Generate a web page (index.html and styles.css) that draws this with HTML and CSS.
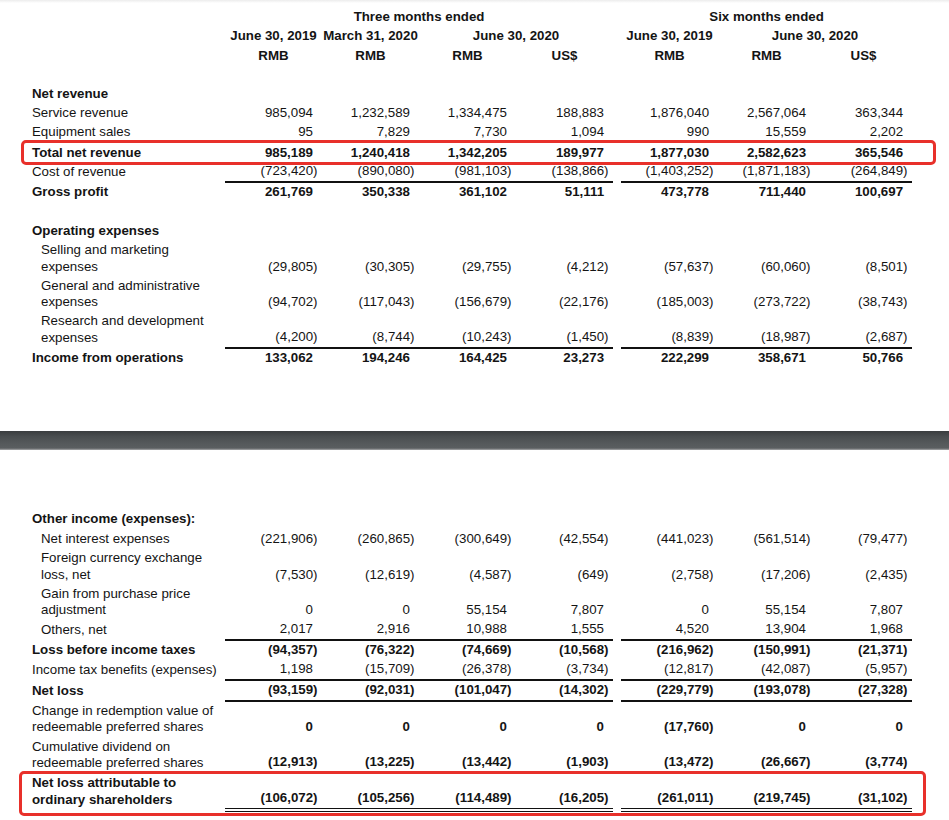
FILE: index.html
```html
<!DOCTYPE html>
<html lang="en">
<head>
<meta charset="utf-8">
<title>Unaudited Condensed Consolidated Statements of Operations</title>
<link rel="stylesheet" href="styles.css">
</head>
<body>
<section class="part part-top">
  <table class="fin">
    <colgroup>
      <col class="c-label"><col class="c-num"><col class="c-num"><col class="c-num"><col class="c-num"><col class="c-sp"><col class="c-num"><col class="c-num"><col class="c-num">
    </colgroup>
    <thead>
      <tr class="hrow">
        <td class="l"></td><th colspan="4">Three months ended</th><td class="sp"></td><th colspan="3">Six months ended</th>
      </tr>
      <tr class="hrow">
        <td class="l"></td><th>June 30, 2019</th><th>March 31, 2020</th><th colspan="2">June 30, 2020</th><td class="sp"></td><th>June 30, 2019</th><th colspan="2">June 30, 2020</th>
      </tr>
      <tr class="hrow">
        <td class="l"></td><th>RMB</th><th>RMB</th><th>RMB</th><th>US$</th><td class="sp"></td><th>RMB</th><th>RMB</th><th>US$</th>
      </tr>
    </thead>
    <tbody>
      <tr class="blank"><td class="l" colspan="9"></td></tr>
      <tr class="b"><td class="l">Net revenue</td><td></td><td></td><td></td><td></td><td class="sp"></td><td></td><td></td><td></td></tr>
      <tr><td class="l">Service revenue</td><td>985,094</td><td>1,232,589</td><td>1,334,475</td><td>188,883</td><td class="sp"></td><td>1,876,040</td><td>2,567,064</td><td>363,344</td></tr>
      <tr><td class="l">Equipment sales</td><td>95</td><td>7,829</td><td>7,730</td><td>1,094</td><td class="sp"></td><td>990</td><td>15,559</td><td>2,202</td></tr>
      <tr class="b hl total"><td class="l">Total net revenue<span class="mark mark-total"></span></td><td>985,189</td><td>1,240,418</td><td>1,342,205</td><td>189,977</td><td class="sp"></td><td>1,877,030</td><td>2,582,623</td><td>365,546</td></tr>
      <tr class="u"><td class="l">Cost of revenue</td><td class="n">(723,420)</td><td class="n">(890,080)</td><td class="n">(981,103)</td><td class="n">(138,866)</td><td class="sp"></td><td class="n">(1,403,252)</td><td class="n">(1,871,183)</td><td class="n">(264,849)</td></tr>
      <tr class="b"><td class="l">Gross profit</td><td>261,769</td><td>350,338</td><td>361,102</td><td>51,111</td><td class="sp"></td><td>473,778</td><td>711,440</td><td>100,697</td></tr>
      <tr class="blank tall"><td class="l" colspan="9"></td></tr>
      <tr class="b"><td class="l">Operating expenses</td><td></td><td></td><td></td><td></td><td class="sp"></td><td></td><td></td><td></td></tr>
      <tr><td class="l ind">Selling and marketing<br>expenses</td><td class="n">(29,805)</td><td class="n">(30,305)</td><td class="n">(29,755)</td><td class="n">(4,212)</td><td class="sp"></td><td class="n">(57,637)</td><td class="n">(60,060)</td><td class="n">(8,501)</td></tr>
      <tr><td class="l ind">General and administrative<br>expenses</td><td class="n">(94,702)</td><td class="n">(117,043)</td><td class="n">(156,679)</td><td class="n">(22,176)</td><td class="sp"></td><td class="n">(185,003)</td><td class="n">(273,722)</td><td class="n">(38,743)</td></tr>
      <tr class="u"><td class="l ind">Research and development<br>expenses</td><td class="n">(4,200)</td><td class="n">(8,744)</td><td class="n">(10,243)</td><td class="n">(1,450)</td><td class="sp"></td><td class="n">(8,839)</td><td class="n">(18,987)</td><td class="n">(2,687)</td></tr>
      <tr class="b"><td class="l">Income from operations</td><td>133,062</td><td>194,246</td><td>164,425</td><td>23,273</td><td class="sp"></td><td>222,299</td><td>358,671</td><td>50,766</td></tr>
    </tbody>
  </table>
</section>

<div class="band"></div>

<section class="part part-bottom">
  <table class="fin">
    <colgroup>
      <col class="c-label"><col class="c-num"><col class="c-num"><col class="c-num"><col class="c-num"><col class="c-sp"><col class="c-num"><col class="c-num"><col class="c-num">
    </colgroup>
    <tbody>
      <tr class="b"><td class="l">Other income (expenses):</td><td></td><td></td><td></td><td></td><td class="sp"></td><td></td><td></td><td></td></tr>
      <tr class="roomy"><td class="l ind">Net interest expenses</td><td class="n">(221,906)</td><td class="n">(260,865)</td><td class="n">(300,649)</td><td class="n">(42,554)</td><td class="sp"></td><td class="n">(441,023)</td><td class="n">(561,514)</td><td class="n">(79,477)</td></tr>
      <tr><td class="l ind">Foreign currency exchange<br>loss, net</td><td class="n">(7,530)</td><td class="n">(12,619)</td><td class="n">(4,587)</td><td class="n">(649)</td><td class="sp"></td><td class="n">(2,758)</td><td class="n">(17,206)</td><td class="n">(2,435)</td></tr>
      <tr><td class="l ind">Gain from purchase price<br>adjustment</td><td>0</td><td>0</td><td>55,154</td><td>7,807</td><td class="sp"></td><td>0</td><td>55,154</td><td>7,807</td></tr>
      <tr class="u"><td class="l ind">Others, net</td><td>2,017</td><td>2,916</td><td>10,988</td><td>1,555</td><td class="sp"></td><td>4,520</td><td>13,904</td><td>1,968</td></tr>
      <tr class="b"><td class="l">Loss before income taxes</td><td class="n">(94,357)</td><td class="n">(76,322)</td><td class="n">(74,669)</td><td class="n">(10,568)</td><td class="sp"></td><td class="n">(216,962)</td><td class="n">(150,991)</td><td class="n">(21,371)</td></tr>
      <tr class="u"><td class="l">Income tax benefits (expenses)</td><td>1,198</td><td class="n">(15,709)</td><td class="n">(26,378)</td><td class="n">(3,734)</td><td class="sp"></td><td class="n">(12,817)</td><td class="n">(42,087)</td><td class="n">(5,957)</td></tr>
      <tr class="b u"><td class="l">Net loss</td><td class="n">(93,159)</td><td class="n">(92,031)</td><td class="n">(101,047)</td><td class="n">(14,302)</td><td class="sp"></td><td class="n">(229,779)</td><td class="n">(193,078)</td><td class="n">(27,328)</td></tr>
      <tr class="bn"><td class="l">Change in redemption value of<br>redeemable preferred shares</td><td>0</td><td>0</td><td>0</td><td>0</td><td class="sp"></td><td class="n">(17,760)</td><td>0</td><td>0</td></tr>
      <tr class="bn u"><td class="l">Cumulative dividend on<br>redeemable preferred shares</td><td class="n">(12,913)</td><td class="n">(13,225)</td><td class="n">(13,442)</td><td class="n">(1,903)</td><td class="sp"></td><td class="n">(13,472)</td><td class="n">(26,667)</td><td class="n">(3,774)</td></tr>
      <tr class="b dbl hl"><td class="l">Net loss attributable to<br>ordinary shareholders<span class="mark mark-final"></span></td><td class="n">(106,072)</td><td class="n">(105,256)</td><td class="n">(114,489)</td><td class="n">(16,205)</td><td class="sp"></td><td class="n">(261,011)</td><td class="n">(219,745)</td><td class="n">(31,102)</td></tr>
    </tbody>
  </table>
</section>
</body>
</html>
```

FILE: styles.css
```css
html, body {
  margin: 0;
  padding: 0;
  background: #ffffff;
}

body {
  font-family: "Liberation Sans", Arial, Helvetica, sans-serif;
  font-size: 13.3px;
  color: #141414;
  width: 949px;
  height: 820px;
  overflow: hidden;
  background: linear-gradient(#ececec, #ffffff 3px);
}

.part {
  padding-left: 32px;
}

.part-top {
  padding-top: 7px;
}

.part-bottom {
  padding-top: 60px;
}

.fin {
  border-collapse: collapse;
  border-spacing: 0;
  table-layout: fixed;
  width: 880px;
}

.c-label { width: 193px; }
.c-num { width: 97px; }
.c-sp { width: 8px; }

.fin td,
.fin th {
  padding: 1.25px 9px 1.25px 0;
  line-height: 16.5px;
  vertical-align: bottom;
  white-space: nowrap;
  text-align: right;
}

.fin th {
  font-weight: bold;
  text-align: center;
  padding-right: 0;
}

.hrow th,
.hrow td {
  padding-top: 1.5px;
  padding-bottom: 1.5px;
}

.fin td.l {
  text-align: left;
  padding-right: 0;
}

.fin td.ind {
  padding-left: 9px;
}

.fin td.n {
  padding-right: 4.5px;
}

.fin td.sp {
  padding: 0;
}

.blank td {
  height: 16.5px;
}

.blank.tall td {
  height: 17.5px;
}

.b td {
  font-weight: bold;
}

.bn td:not(.l) {
  font-weight: bold;
}

.bn td {
  padding-top: 1.75px;
}

.total td {
  padding-top: 3px;
  padding-bottom: 1px;
}

.roomy td {
  padding-top: 2.5px;
}

.dbl td {
  padding-top: 2.5px;
}

.u td:not(.l):not(.sp) {
  border-bottom: 2px solid #111111;
}

.dbl td:not(.l):not(.sp) {
  border-bottom: 4px double #111111;
}

.hl {
  position: relative;
}

.mark {
  position: absolute;
  border: 3px solid #e8302a;
  border-radius: 5px;
  pointer-events: none;
}

.mark-total {
  left: -11px;
  right: -24px;
  top: -2px;
  bottom: -3px;
}

.mark-final {
  left: -13px;
  right: -14px;
  top: -2px;
  bottom: -6px;
}

.band {
  height: 19px;
  margin-top: 63px;
  background: linear-gradient(#3a3d3f 0%, #4a4e50 30%, #55595b 65%, #5a5e60 90%, #a7a9aa 100%);
}
```
